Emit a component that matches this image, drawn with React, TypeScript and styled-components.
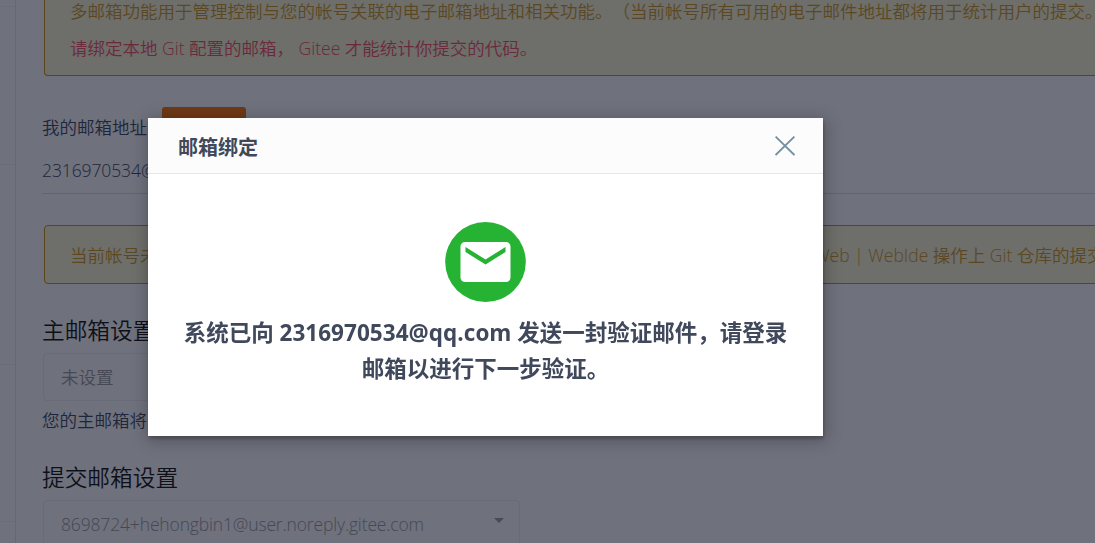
import React from 'react';
import styled, {createGlobalStyle} from "styled-components";


const GlobalStyle = createGlobalStyle`
  * {
    box-sizing: border-box;
  }

  body {
    margin: 0;
    overflow: hidden;
    background-color: #6f717d;
    font-family: "Open Sans", "Noto Sans CJK SC", sans-serif;
    font-size: 17.5px;
    font-weight: 350;
    text-spacing-trim: space-all;
    color: #20263a;
  }
`
const Page = styled.div`
  display: flex;
  height: 543px;
  overflow: hidden;
`
const Sidebar = styled.div`
  flex: none;
  width: 16px;
  border-right: 1px solid #656772;
`
const SidebarItem = styled.div<{ $height: number }>`
  height: ${p => p.$height}px;
  border-bottom: 1px solid #6a6c77;
`
const Content = styled.div`
  flex: none;
  width: 1200px;
  padding-left: 26px;
  white-space: nowrap;
`
const Alert = styled.div<{ $height: number, $open?: boolean }>`
  height: ${p => p.$height}px;
  margin-left: 2px;
  padding: 0 0 ${p => p.$open ? 8 : 9}px 25px;
  display: flex;
  flex-direction: column;
  justify-content: flex-end;
  border: 1px solid #5b4419;
  border-top-width: ${p => p.$open ? 0 : 1}px;
  border-radius: ${p => p.$open ? '0 0 4px 4px' : '4px'};
  background-color: #6e6e6a;
`
const AlertLine = styled.div<{ $danger?: boolean }>`
  display: flex;
  height: 37px;
  line-height: 37px;
  color: ${p => p.$danger ? '#6b2a3b' : '#5b4822'};
`
const AlertHead = styled.span`
  width: 744px;
`
const AddressHeader = styled.div`
  display: flex;
  height: 40px;
  margin-top: 31px;
  line-height: 40px;
`
const AddButton = styled.button`
  width: 84px;
  height: 36px;
  margin-left: 15px;
  padding: 0;
  border: 0;
  border-radius: 3px;
  background-color: #6f3916;
`
const AddressRow = styled.div`
  height: 47px;
  margin-bottom: 31px;
  line-height: 46px;
  border-bottom: 1px solid #62646f;
`
const Settings = styled.div`
  padding-top: 25px;
`
const Heading = styled.h3`
  margin: 0;
  height: 44px;
  line-height: 43px;
  font-size: 22.7px;
  font-weight: inherit;
  color: #0e1018;
`
const Select = styled.div`
  display: flex;
  justify-content: space-between;
  width: 477px;
  height: 48px;
  margin-left: 1px;
  padding: 0 15px 0 17px;
  border: 1px solid #696b76;
  border-radius: 4px;
  line-height: 47px;
  color: #464853;
`
const Caret = styled.span`
  width: 0;
  height: 0;
  margin-top: 17px;
  border: 5px solid transparent;
  border-top-color: #484b57;
  border-bottom: 0;
`
const Hint = styled.div`
  height: 55px;
  line-height: 38px;
`
const Overlay = styled.div`
  position: fixed;
  inset: 0;
  padding: 118px 0 0 148px;
`
const Modal = styled.div`
  width: 675px;
  height: 318px;
  background-color: #fff;
  color: #40485b;
  box-shadow: 1px 3px 3px rgba(0, 0, 0, .2), 1px 3px 15px 2px rgba(0, 0, 0, .25);
`
const ModalHeader = styled.div`
  display: flex;
  justify-content: space-between;
  height: 56px;
  padding: 0 28px 0 30px;
  border-bottom: 1px solid #e6e6e6;
  background-color: #fcfcfc;
  font-size: 20px;
  font-weight: 700;
  line-height: 60px;

  svg {
    margin-top: 18px;
  }
`
const ModalBody = styled.div`
  display: flex;
  flex-direction: column;
  align-items: center;
  padding-top: 48px;
`
const Message = styled.div`
  margin-top: 13px;
  font-size: 22.5px;
  font-weight: 700;
  line-height: 36px;
  text-align: center;
  white-space: nowrap;
`
const Email = styled.span<{ $spacing: number }>`
  letter-spacing: ${p => p.$spacing}px;
`


const CloseIcon: React.FC = () => (
    <svg width="20" height="20" viewBox="0 0 20 20" fill="none" stroke="#74909e" strokeWidth="1.8">
        <path d="M.6.6l18.8 18.4M19.4.6.6 19"/>
    </svg>
)

const MailIcon: React.FC = () => (
    <svg width="81" height="80" viewBox="0 0 81 80">
        <ellipse cx="40.5" cy="40" rx="40.3" ry="40" fill="#26b233"/>
        <rect x="15.5" y="20" width="50" height="40" rx="4.5" fill="#fff"/>
        <path d="M20.5 25 40.5 37.5 60.5 25v5L40.5 42.5 20.5 30z" fill="#26b233"/>
    </svg>
)


const App: React.FC = () => {
    return (
        <>
            <GlobalStyle/>
            <Page>
                <Sidebar>
                    <SidebarItem $height={7}/>
                    <SidebarItem $height={158}/>
                    <SidebarItem $height={200}/>
                    <SidebarItem $height={157}/>
                </Sidebar>
                <Content>
                    <Alert $height={76} $open>
                        <AlertLine>多邮箱功能用于管理控制与您的帐号关联的电子邮箱地址和相关功能。（当前帐号所有可用的电子邮件地址都将用于统计用户的提交。</AlertLine>
                        <AlertLine $danger>请绑定本地 Git 配置的邮箱， Gitee 才能统计你提交的代码。</AlertLine>
                    </Alert>
                    <AddressHeader>
                        我的邮箱地址
                        <AddButton/>
                    </AddressHeader>
                    <AddressRow>
                        <Email $spacing={-0.1}>2316970534@qq.com</Email>
                    </AddressRow>
                    <Alert $height={59}>
                        <AlertLine>
                            <AlertHead>当前帐号未</AlertHead>
                            Web | WebIde 操作上 Git 仓库的提交
                        </AlertLine>
                    </Alert>
                    <Settings>
                        <Heading>主邮箱设置</Heading>
                        <Select>未设置<Caret/></Select>
                        <Hint>您的主邮箱将</Hint>
                        <Heading>提交邮箱设置</Heading>
                        <Select>
                            <Email $spacing={-0.15}>8698724+hehongbin1@user.noreply.gitee.com</Email>
                            <Caret/>
                        </Select>
                    </Settings>
                </Content>
            </Page>
            <Overlay>
                <Modal>
                    <ModalHeader>邮箱绑定<CloseIcon/></ModalHeader>
                    <ModalBody>
                        <MailIcon/>
                        <Message>
                            系统已向 <Email $spacing={0.04}>2316970534@qq.com</Email> 发送一封验证邮件，请登录<br/>
                            邮箱以进行下一步验证。
                        </Message>
                    </ModalBody>
                </Modal>
            </Overlay>
        </>
    )
}
export default App;
